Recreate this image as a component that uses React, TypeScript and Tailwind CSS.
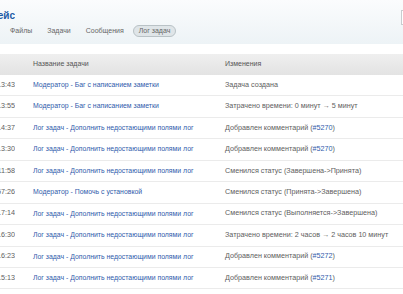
const rows = [
  { time: '13:43', task: 'Модератор - Баг с написанием заметки', change: 'Задача создана' },
  { time: '13:55', task: 'Модератор - Баг с написанием заметки', change: 'Затрачено времени: 0 минут → 5 минут' },
  { time: '14:37', task: 'Лог задач - Дополнить недостающими полями лог', change: 'Добравлен комментарий', ref: '#5270' },
  { time: '13:30', task: 'Лог задач - Дополнить недостающими полями лог', change: 'Добравлен комментарий', ref: '#5270' },
  { time: '11:58', task: 'Лог задач - Дополнить недостающими полями лог', change: 'Сменился статус (Завершена->Принята)' },
  { time: '57:26', task: 'Модератор - Помочь с установкой', change: 'Сменился статус (Принята->Завершена)' },
  { time: '17:14', task: 'Лог задач - Дополнить недостающими полями лог', change: 'Сменился статус (Выполняется->Завершена)' },
  { time: '16:30', task: 'Лог задач - Дополнить недостающими полями лог', change: 'Затрачено времени: 2 часов → 2 часов 10 минут' },
  { time: '16:23', task: 'Лог задач - Дополнить недостающими полями лог', change: 'Добравлен комментарий', ref: '#5272' },
  { time: '15:13', task: 'Лог задач - Дополнить недостающими полями лог', change: 'Добравлен комментарий', ref: '#5271' },
];

export default function App() {
  return (
    <div className="w-[403px] h-[294px] overflow-hidden bg-white text-[7.2px] text-[#5e5e5e] font-['Liberation_Sans',Arial,sans-serif]">
      {/* project header */}
      <div className="relative h-[44px] bg-gradient-to-b from-[#fbfcfd] to-[#edf3f6]">
        <div className="flex justify-end w-[15px] overflow-hidden whitespace-nowrap pt-[10px] text-[10px] font-bold text-[#1d5ba6] leading-[12px]">
          Интерфейс
        </div>
        <div className="flex items-center h-[14px] mt-[2px] pl-[10px] gap-[15px] text-[#666] text-[7px]">
          <span>Файлы</span>
          <span>Задачи</span>
          <span>Сообщения</span>
          <span className="ml-[-6px] px-[5px] h-[12px] leading-[10px] rounded-full border border-[#b9c2c6] bg-[#dfe5e8]">Лог задач</span>
        </div>
        <div className="absolute left-[401px] top-[10px] w-[10px] h-[15px] border border-[#c8cdd0] bg-white" />
      </div>

      {/* log table */}
      <div className="mt-[10px]">
        <div className="flex items-center h-[21px] bg-gradient-to-b from-[#efefef] to-[#e3e3e3] text-[#555] text-[7px]">
          <div className="w-[33px]" />
          <div className="w-[192px]">Название задачи</div>
          <div>Изменения</div>
        </div>
        {rows.map((r, i) => (
          <div key={i} className="flex items-center h-[21.44px] border-b border-[#ebebeb] whitespace-nowrap">
            <div className="w-[15px] flex justify-end overflow-hidden">{r.time}</div>
            <div className="w-[18px]" />
            <div className="w-[192px] text-[#2f5bab] text-[6.9px]">{r.task}</div>
            <div>
              {r.change}
              {r.ref && (
                <>
                  {' ('}
                  <span className="text-[#2f5bab]">{r.ref}</span>
                  {')'}
                </>
              )}
            </div>
          </div>
        ))}
      </div>
    </div>
  );
}
